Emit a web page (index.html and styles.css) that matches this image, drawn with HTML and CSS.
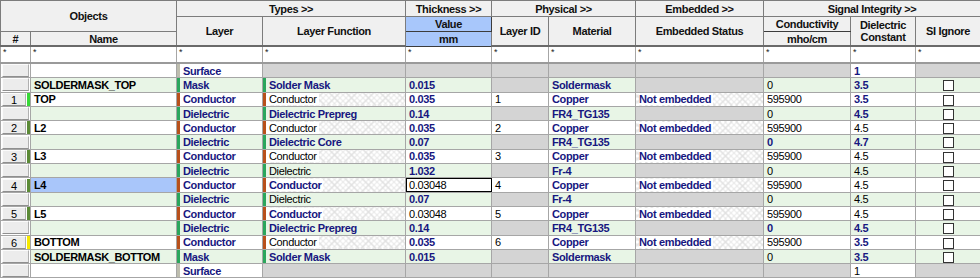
FILE: index.html
```html
<!DOCTYPE html>
<html>
<head>
<meta charset="utf-8">
<link rel="stylesheet" href="styles.css">
</head>
<body>
<table class="grid">
<colgroup>
<col class="c-num"><col class="c-name"><col class="c-layer"><col class="c-func"><col class="c-thk"><col class="c-id"><col class="c-mat"><col class="c-emb"><col class="c-cond"><col class="c-diel"><col class="c-si">
</colgroup>
<thead>
<tr class="hA">
<th colspan="2" rowspan="2" class="obj">Objects</th>
<th colspan="2">Types &gt;&gt;</th>
<th>Thickness &gt;&gt;</th>
<th colspan="2">Physical &gt;&gt;</th>
<th>Embedded &gt;&gt;</th>
<th colspan="3">Signal Integrity &gt;&gt;</th>
</tr>
<tr class="hB">
<th rowspan="2">Layer</th>
<th rowspan="2">Layer Function</th>
<th class="blue">Value</th>
<th rowspan="2">Layer ID</th>
<th rowspan="2">Material</th>
<th rowspan="2">Embedded Status</th>
<th class="unit-top">Conductivity</th>
<th rowspan="2" class="two">Dielectric<br>Constant</th>
<th rowspan="2">SI Ignore</th>
</tr>
<tr class="hC">
<th>#</th>
<th>Name</th>
<th class="blue">mm</th>
<th class="unit">mho/cm</th>
</tr>
<tr class="flt">
<td>*</td><td>*</td><td>*</td><td>*</td><td>*</td><td>*</td><td>*</td><td>*</td><td>*</td><td>*</td><td>*</td>
</tr>
</thead>
<tbody>
<tr class="r">
<td class="num"><span class="btn wide"></span></td>
<td></td>
<td class="b ss">Surface</td>
<td class="g"></td><td class="g"></td><td class="g"></td><td class="g"></td><td class="g"></td><td class="g"></td>
<td class="b">1</td>
<td class="g"></td>
</tr>
<tr class="r gr">
<td class="num"><span class="btn wide"></span></td>
<td class="nm">SOLDERMASK_TOP</td>
<td class="b sd">Mask</td>
<td class="b sd">Solder Mask</td>
<td class="b">0.015</td>
<td class="g"></td>
<td class="b">Soldermask</td>
<td class="g"></td>
<td>0</td>
<td class="b">3.5</td>
<td class="si"><span class="chk"></span></td>
</tr>
<tr class="r">
<td class="num"><span class="btn">1</span><span class="mark top"></span></td>
<td class="nm">TOP</td>
<td class="b sc">Conductor</td>
<td class="sc h"><span>Conductor</span></td>
<td class="b">0.035</td>
<td>1</td>
<td class="b">Copper</td>
<td class="b h"><span>Not embedded</span></td>
<td>595900</td>
<td class="b">3.5</td>
<td class="si"><span class="chk"></span></td>
</tr>
<tr class="r gr">
<td class="num"><span class="btn wide"></span></td>
<td></td>
<td class="b sd">Dielectric</td>
<td class="b sd">Dielectric Prepreg</td>
<td class="b">0.14</td>
<td class="g"></td>
<td class="b">FR4_TG135</td>
<td class="g"></td>
<td>0</td>
<td class="b">4.5</td>
<td class="si"><span class="chk"></span></td>
</tr>
<tr class="r">
<td class="num"><span class="btn">2</span><span class="mark mid"></span></td>
<td class="nm">L2</td>
<td class="b sc">Conductor</td>
<td class="sc h"><span>Conductor</span></td>
<td class="b">0.035</td>
<td>2</td>
<td class="b">Copper</td>
<td class="b h"><span>Not embedded</span></td>
<td>595900</td>
<td>4.5</td>
<td class="si"><span class="chk"></span></td>
</tr>
<tr class="r gr">
<td class="num"><span class="btn wide"></span></td>
<td></td>
<td class="b sd">Dielectric</td>
<td class="b sd">Dielectric Core</td>
<td class="b">0.07</td>
<td class="g"></td>
<td class="b">FR4_TG135</td>
<td class="g"></td>
<td class="b">0</td>
<td class="b">4.7</td>
<td class="si"><span class="chk"></span></td>
</tr>
<tr class="r">
<td class="num"><span class="btn">3</span><span class="mark mid"></span></td>
<td class="nm">L3</td>
<td class="b sc">Conductor</td>
<td class="sc h"><span>Conductor</span></td>
<td class="b">0.035</td>
<td>3</td>
<td class="b">Copper</td>
<td class="b h"><span>Not embedded</span></td>
<td>595900</td>
<td>4.5</td>
<td class="si"><span class="chk"></span></td>
</tr>
<tr class="r gr">
<td class="num"><span class="btn wide"></span></td>
<td></td>
<td class="b sd">Dielectric</td>
<td class="sd">Dielectric</td>
<td class="b">1.032</td>
<td class="g"></td>
<td class="b">Fr-4</td>
<td class="g"></td>
<td>0</td>
<td>4.5</td>
<td class="si"><span class="chk"></span></td>
</tr>
<tr class="r">
<td class="num"><span class="btn">4</span><span class="mark mid"></span></td>
<td class="nm sel">L4</td>
<td class="b sc">Conductor</td>
<td class="b sc h"><span>Conductor</span></td>
<td class="focus">0.03048</td>
<td>4</td>
<td class="b">Copper</td>
<td class="b h"><span>Not embedded</span></td>
<td>595900</td>
<td>4.5</td>
<td class="si"><span class="chk"></span></td>
</tr>
<tr class="r gr">
<td class="num"><span class="btn wide"></span></td>
<td></td>
<td class="b sd">Dielectric</td>
<td class="sd">Dielectric</td>
<td class="b">0.07</td>
<td class="g"></td>
<td class="b">Fr-4</td>
<td class="g"></td>
<td>0</td>
<td>4.5</td>
<td class="si"><span class="chk"></span></td>
</tr>
<tr class="r">
<td class="num"><span class="btn">5</span><span class="mark mid"></span></td>
<td class="nm">L5</td>
<td class="b sc">Conductor</td>
<td class="b sc h"><span>Conductor</span></td>
<td>0.03048</td>
<td>5</td>
<td class="b">Copper</td>
<td class="b h"><span>Not embedded</span></td>
<td>595900</td>
<td>4.5</td>
<td class="si"><span class="chk"></span></td>
</tr>
<tr class="r gr">
<td class="num"><span class="btn wide"></span></td>
<td></td>
<td class="b sd">Dielectric</td>
<td class="b sd">Dielectric Prepreg</td>
<td class="b">0.14</td>
<td class="g"></td>
<td class="b">FR4_TG135</td>
<td class="g"></td>
<td class="b">0</td>
<td class="b">4.5</td>
<td class="si"><span class="chk"></span></td>
</tr>
<tr class="r">
<td class="num"><span class="btn">6</span><span class="mark bot"></span></td>
<td class="nm">BOTTOM</td>
<td class="b sc">Conductor</td>
<td class="sc h"><span>Conductor</span></td>
<td class="b">0.035</td>
<td>6</td>
<td class="b">Copper</td>
<td class="b h"><span>Not embedded</span></td>
<td>595900</td>
<td class="b">3.5</td>
<td class="si"><span class="chk"></span></td>
</tr>
<tr class="r gr">
<td class="num"><span class="btn wide"></span></td>
<td class="nm">SOLDERMASK_BOTTOM</td>
<td class="b sd">Mask</td>
<td class="b sd">Solder Mask</td>
<td class="b">0.015</td>
<td class="g"></td>
<td class="b">Soldermask</td>
<td class="g"></td>
<td>0</td>
<td class="b">3.5</td>
<td class="si"><span class="chk"></span></td>
</tr>
<tr class="r">
<td class="num"><span class="btn wide"></span></td>
<td></td>
<td class="b ss">Surface</td>
<td class="g"></td><td class="g"></td><td class="g"></td><td class="g"></td><td class="g"></td><td class="g"></td>
<td>1</td>
<td class="g"></td>
</tr>
</tbody>
</table>
</body>
</html>
```

FILE: styles.css
```css
html, body {
  margin: 0;
  padding: 0;
  background: #ffffff;
}

.grid {
  width: 980px;
  table-layout: fixed;
  border-collapse: collapse;
  font-family: "Liberation Sans", Arial, sans-serif;
  font-size: 11px;
  letter-spacing: -0.35px;
  color: #000;
}

.c-num { width: 30px; }
.c-name { width: 146px; }
.c-layer { width: 86px; }
.c-func { width: 143px; }
.c-thk { width: 86px; }
.c-id { width: 57px; }
.c-mat { width: 87px; }
.c-emb { width: 128px; }
.c-cond { width: 87px; }
.c-diel { width: 65px; }
.c-si { width: 65px; }

/* header */
.grid th {
  background: #f0f0f0;
  border: 1px solid #7c7c7c;
  font-weight: bold;
  color: #111;
  padding: 0 2px;
  text-align: center;
  vertical-align: middle;
  white-space: nowrap;
  line-height: 12px;
  overflow: hidden;
}
.hA th { height: 15px; }
.hB th { height: 14px; }
.hC th { height: 13px; border-bottom: 2px solid #6a6a6a; }
.hB th[rowspan="2"] { border-bottom: 2px solid #6a6a6a; }
.hA th.obj { border-bottom: 1px solid #7c7c7c; }
.grid th.blue {
  background: #a8c7fb;
  border: 1px solid #3c3c3c;
}
.grid th.two { line-height: 12px; }
.grid th.unit-top { border-bottom: 1px solid #3c3c3c; }

/* filter row */
.flt td {
  height: 14px;
  border: 1px solid #a6a6a6;
  border-bottom: 2px solid #9a9a9a;
  font-size: 9px;
  line-height: 9px;
  vertical-align: top;
  padding: 1px 2px 0;
  color: #222;
  background: #fff;
}

/* data rows */
.r td {
  height: 13.3px;
  border: 1px solid #a6a6a6;
  padding: 0 3px;
  line-height: 12px;
  white-space: nowrap;
  overflow: hidden;
  vertical-align: middle;
  background: #ffffff;
}
.r.gr td { background: #e8f5e6; }
.r td.g { background: #d4d4d4; }

.r td.b { font-weight: bold; color: #171780; }
.r td.nm { font-weight: bold; color: #000; }
.r td.nm.sel { background: #a9c6fa; }

.r td.sc { box-shadow: inset 3px 0 0 #b8501b; padding-left: 6px; }
.r td.sd { box-shadow: inset 3px 0 0 #2aa65c; padding-left: 6px; }
.r td.ss { box-shadow: inset 3px 0 0 #bdbdae; padding-left: 6px; }

.r td.h {
  background-color: #ffffff;
  background-image:
    repeating-linear-gradient(45deg, transparent 0 3px, #e0e0e0 3px 4px),
    repeating-linear-gradient(-45deg, transparent 0 3px, #e0e0e0 3px 4px);
}
.r td.h span {
  background: #ffffff;
  padding-right: 2px;
}
.r td.sc.h { box-shadow: inset 3px 0 0 #b8501b, inset 6px 0 0 #ffffff; }

.r td.focus {
  outline: 1px solid #000;
  outline-offset: -1px;
}

/* row header column */
.r td.num {
  padding: 0;
  background: #ffffff;
}
.r.gr td.num { background: #ffffff; }
.btn {
  display: inline-block;
  box-sizing: border-box;
  vertical-align: top;
  width: 24px;
  height: 13px;
  margin: 0 0 0 1px;
  background: #ececec;
  border-top: 1px solid #fbfbfb;
  border-left: 1px solid #fbfbfb;
  border-bottom: 1px solid #8f8f8f;
  border-right: 1px solid #b0b0b0;
  text-align: center;
  font-size: 11px;
  line-height: 12px;
  color: #000;
}
.btn.wide { width: 27px; }
.mark {
  display: inline-block;
  vertical-align: top;
  width: 3px;
  height: 13px;
  margin-left: 1px;
}
.mark.top { background: #38d838; }
.mark.mid { background: #5b8a36; }
.mark.bot { background: #f5e800; }

/* SI ignore checkbox */
.r td.si { text-align: center; padding: 0; }
.chk {
  display: inline-block;
  box-sizing: border-box;
  width: 11px;
  height: 11px;
  border: 1px solid #333;
  background: #fff;
  vertical-align: middle;
}
```
